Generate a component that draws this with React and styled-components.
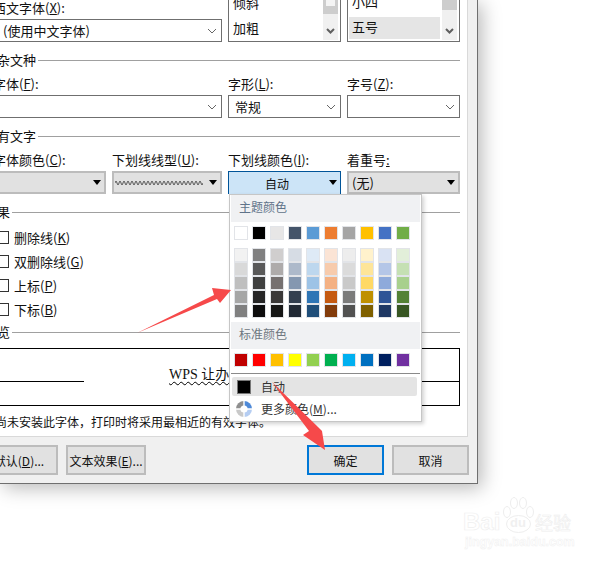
import React from 'react';
import styled, { createGlobalStyle } from 'styled-components';

const THEME = ['#ffffff', '#000000', '#e7e6e6', '#44546a', '#5b9bd5', '#ed7d31', '#a5a5a5', '#ffc000', '#4472c4', '#70ad47'];
const SHADES = [
  ['#f2f2f2', '#808080', '#d0cece', '#d6dce4', '#deeaf6', '#fbe4d5', '#ededed', '#fff2cc', '#d9e2f3', '#e2efd9'],
  ['#d9d9d9', '#595959', '#aeabab', '#adb9ca', '#bdd7ee', '#f7cbac', '#dbdbdb', '#fee599', '#b4c6e7', '#c5e0b3'],
  ['#bfbfbf', '#404040', '#757070', '#8497b0', '#9dc3e6', '#f4b183', '#c9c9c9', '#ffd965', '#8eaadb', '#a8d08d'],
  ['#a6a6a6', '#262626', '#3a3838', '#333f4f', '#2e75b5', '#c55a11', '#7b7b7b', '#bf9000', '#2f5496', '#538135'],
  ['#808080', '#0d0d0d', '#161616', '#222a35', '#1f4e79', '#833c0b', '#525252', '#7f6000', '#1f3864', '#375623'],
];
const STANDARD = ['#c00000', '#ff0000', '#ffc000', '#ffff00', '#92d050', '#00b050', '#00b0f0', '#0070c0', '#002060', '#7030a0'];
const HINT = '\u5982\u679c\u5c1a\u672a\u5b89\u88c5\u6b64\u5b57\u4f53\uff0c\u6253\u5370\u65f6\u5c06\u91c7\u7528\u6700\u76f8\u8fd1\u7684\u6709\u6548\u5b57\u4f53\u3002';

const wavePath = () => {
  let d = 'M0 3';
  for (let x = 0; x < 88; x += 4) d += ` q1 -4 2 0 t2 0`;
  return d;
};

const Chevron = () => (
  <ChevronIcon width="10" height="6" viewBox="0 0 10 6">
    <path d="M1 1l4 4 4-4" fill="none" stroke="#666" strokeWidth="1" />
  </ChevronIcon>
);

const ScrollDown = () => (
  <svg width="9" height="7" viewBox="0 0 9 7">
    <path d="M1 1l3.5 3.5L8 1" fill="none" stroke="#606060" strokeWidth="2" />
  </svg>
);

const Caret = () => (
  <CaretIcon width="8" height="5" viewBox="0 0 8 5">
    <path d="M0 0h8L4 5z" fill="#000" />
  </CaretIcon>
);

const MoreColorsIcon = () => (
  <svg width="16" height="18" viewBox="0 0 16 18">
    <path d="M8 1a8 8 0 0 0-8 8h8z" fill="#8f8f8f" />
    <path d="M8 1a8 8 0 0 1 8 8H8z" fill="#4f8ad8" />
    <path d="M0 9a8 8 0 0 0 8 8V9z" fill="#c9c9c9" />
    <path d="M16 9a8 8 0 0 1-8 8V9z" fill="#b5cdf2" />
    <path d="M8 1v16M0 9h16" stroke="#fff" strokeWidth="1.4" />
    <circle cx="8" cy="9" r="3.6" fill="#fff" />
  </svg>
);

const Arrows = () => (
  <ArrowLayer width="606" height="562" viewBox="0 0 606 562">
    <path d="M137 333L214 295 212 288 231 290 220 303 217 299z" fill="#f6494a" />
    <path d="M272 382L318 427 322 431 325 450 303 435 309 431z" fill="#f6494a" />
  </ArrowLayer>
);

const PawMark = () => (
  <PawIcon width="33" height="37" viewBox="0 0 33 37">
    <g fill="#fff" stroke="#eeeeee" strokeWidth="1">
      <ellipse cx="5" cy="15" rx="3.5" ry="5.5" />
      <ellipse cx="12" cy="6" rx="3.5" ry="5.5" />
      <ellipse cx="21" cy="6" rx="3.5" ry="5.5" />
      <ellipse cx="28" cy="15" rx="3.5" ry="5.5" />
      <ellipse cx="16.5" cy="27" rx="12" ry="8.5" />
    </g>
  </PawIcon>
);

const App = () => {
  return (
    <Page>
      <GlobalStyle />
      <Dialog>
        <Panel>
          <Form>
            <FieldGrid>
              <Field>
                <Label>西文字体(<u>X</u>):</Label>
                <ComboBox $indent={9}>(使用中文字体)<Chevron /></ComboBox>
              </Field>
              <ListBox>
                <ListItems>
                  <ListItem>倾斜</ListItem>
                  <ListItem>加粗</ListItem>
                </ListItems>
                <ScrollTrack>
                  <ScrollThumb $height={14}><ScrollThumbInner /></ScrollThumb>
                  <ScrollDown />
                </ScrollTrack>
              </ListBox>
              <ListBox>
                <ListItems>
                  <ListItem>小四</ListItem>
                  <ListItem $selected>五号</ListItem>
                </ListItems>
                <ScrollTrack>
                  <ScrollThumb $height={10} />
                  <ScrollDown />
                </ScrollTrack>
              </ListBox>
            </FieldGrid>

            <SectionTitle><span>复杂文种</span></SectionTitle>
            <FieldGrid>
              <Field>
                <Label>字体(<u>F</u>):</Label>
                <ComboBox><Chevron /></ComboBox>
              </Field>
              <Field>
                <Label>字形(<u>L</u>):</Label>
                <ComboBox>常规<Chevron /></ComboBox>
              </Field>
              <Field>
                <Label>字号(<u>Z</u>):</Label>
                <ComboBox><Chevron /></ComboBox>
              </Field>
            </FieldGrid>

            <SectionTitle><span>所有文字</span></SectionTitle>
            <FontGrid>
              <Field>
                <Label>字体颜色(<u>C</u>):</Label>
                <DropButton><Caret /></DropButton>
              </Field>
              <Field>
                <Label>下划线线型(<u>U</u>):</Label>
                <DropButton $dense>
                  <svg width="88" height="6" viewBox="0 0 88 6">
                    <path d={wavePath()} fill="none" stroke="#333" strokeWidth="0.8" />
                  </svg>
                  <Caret />
                </DropButton>
              </Field>
              <Field>
                <Label>下划线颜色(<u>I</u>):</Label>
                <DropButton $active><ActiveText>自动</ActiveText><Caret /></DropButton>
              </Field>
              <Field>
                <Label>着重号<u>:</u></Label>
                <DropButton>(无)<Caret /></DropButton>
              </Field>
            </FontGrid>

            <SectionTitle><span>效果</span></SectionTitle>
            <EffectList>
              <EffectRow><CheckBox />删除线(<u>K</u>)</EffectRow>
              <EffectRow><CheckBox />双删除线(<u>G</u>)</EffectRow>
              <EffectRow><CheckBox />上标(<u>P</u>)</EffectRow>
              <EffectRow><CheckBox />下标(<u>B</u>)</EffectRow>
            </EffectList>

            <SectionTitle><span>预览</span></SectionTitle>
            <PreviewBox>
              <PreviewRule $width={91} />
              <PreviewText>WPS 让办公更轻松</PreviewText>
              <PreviewRule $width={120} />
            </PreviewBox>
            <Hint>{HINT}</Hint>
          </Form>
        </Panel>
        <Footer>
          <FooterGroup>
            <Button $width={78}>默认(<u>D</u>)...</Button>
            <Button $width={80}>文本效果(<u>E</u>)...</Button>
          </FooterGroup>
          <FooterGroup>
            <Button $width={77} $primary>确定</Button>
            <Button $width={77}>取消</Button>
          </FooterGroup>
        </Footer>
      </Dialog>

      <ColorMenu>
        <MenuHeading $tint="#5f7389">主题颜色</MenuHeading>
        <SwatchRow $top={4}>
          {THEME.map((c) => <Swatch key={c} $color={c} />)}
        </SwatchRow>
        <ShadeGrid>
          {SHADES.map((row, i) => (
            <SwatchRow key={i} $top={0}>
              {row.map((c, j) => <Swatch key={j} $color={c} />)}
            </SwatchRow>
          ))}
        </ShadeGrid>
        <MenuHeading $tint="#6e7780" $top={4}>标准颜色</MenuHeading>
        <SwatchRow $top={4}>
          {STANDARD.map((c) => <Swatch key={c} $color={c} />)}
        </SwatchRow>
        <MenuDivider />
        <AutoItem><AutoChip />自动</AutoItem>
        <MoreItem><MoreColorsIcon />更多颜色(<u>M</u>)...</MoreItem>
      </ColorMenu>

      <Arrows />

      <Watermark>
        <PawMark />
        <LogoRow>
          <LogoWord>Bai</LogoWord>
          <DuBadge>du</DuBadge>
          <LogoCjk>经验</LogoCjk>
        </LogoRow>
        <LogoUrl>jingyan.baidu.com</LogoUrl>
      </Watermark>
    </Page>
  );
};

export default App;

const GlobalStyle = createGlobalStyle`
  html, body {
    margin: 0;
    padding: 0;
    background: #fff;
  }
  u {
    text-underline-offset: 1px;
  }
`;

const Page = styled.div`
  position: relative;
  width: 606px;
  height: 562px;
  overflow: hidden;
  background: #fff;
  font-family: "Noto Sans CJK SC", "Noto Sans", sans-serif;
  font-size: 13px;
  color: #111;
`;
const Dialog = styled.div`
  width: 478px;
  height: 484px;
  box-sizing: border-box;
  display: flex;
  flex-direction: column;
  background: #f0f0f0;
  border-right: 1px solid #6f6f6f;
  border-bottom: 1px solid #6f6f6f;
  box-shadow: 4px 4px 18px rgba(0, 0, 0, 0.28);
`;
const Panel = styled.div`
  width: 468px;
  height: 437px;
  flex: none;
  box-sizing: border-box;
  background: #fff;
  border-right: 1px solid #d9d9d9;
  border-bottom: 1px solid #d9d9d9;
  overflow: hidden;
`;
const Form = styled.div`
  width: 467px;
  margin-left: -7px;
`;
const FieldGrid = styled.div`
  display: grid;
  grid-template-columns: 229px 113px 113px;
  column-gap: 6px;
`;
const FontGrid = styled.div`
  display: grid;
  grid-template-columns: 113px 110px 113px 113px;
  column-gap: 6px;
`;
const Field = styled.div`
  display: flex;
  flex-direction: column;
  justify-content: flex-end;
  min-width: 0;
`;
const Label = styled.div`
  height: 19px;
  line-height: 16px;
  white-space: nowrap;
  u {
    text-decoration-thickness: 1px;
  }
`;
const ComboBox = styled.div`
  height: 23px;
  box-sizing: border-box;
  display: flex;
  align-items: center;
  justify-content: space-between;
  padding: 0 4px 0 ${(p) => p.$indent || 6}px;
  border: 1px solid #6f6f6f;
  background: #fff;
  line-height: 1;
  white-space: nowrap;
`;
const ChevronIcon = styled.svg`
  flex: none;
  margin-left: auto;
`;
const CaretIcon = styled.svg`
  flex: none;
  margin: 0 0 1px auto;
`;
const DropButton = styled.div`
  height: 23px;
  box-sizing: border-box;
  display: flex;
  align-items: center;
  justify-content: space-between;
  padding: 0 3px 0 ${(p) => (p.$dense ? '1px' : '3px')};
  border: 2px solid ${(p) => (p.$active ? '#005499' : '#bcbcbc')};
  border-width: ${(p) => (p.$active ? '1px 1px 0' : '2px')};
  background: ${(p) => (p.$active ? '#cce4f7' : '#e1e1e1')};
  white-space: nowrap;
`;
const ActiveText = styled.span`
  flex: 1;
  text-align: center;
  font-size: 12px;
  padding-right: 7px;
`;
const ListBox = styled.div`
  height: 42px;
  box-sizing: border-box;
  display: flex;
  border: 1px solid #6f6f6f;
  border-top: none;
  padding: 0 2px 1px 1px;
  overflow: hidden;
`;
const ListItems = styled.div`
  flex: 1;
  min-width: 0;
  display: flex;
  flex-direction: column;
  justify-content: flex-end;
  gap: 3px;
  padding-right: 2px;
`;
const ListItem = styled.div`
  height: 22px;
  flex: none;
  line-height: 19px;
  padding-left: 3px;
  margin-bottom: ${(p) => (p.$selected ? '1px' : '0')};
  background: ${(p) => (p.$selected ? '#e5e5e5' : 'transparent')};
`;
const ScrollTrack = styled.div`
  width: 15px;
  flex: none;
  background: #f0f0f0;
  display: flex;
  flex-direction: column;
  align-items: center;
  justify-content: space-between;
  padding-bottom: 5px;
`;
const ScrollThumb = styled.div`
  width: 100%;
  height: ${(p) => p.$height}px;
  background: #cdcdcd;
  display: flex;
  justify-content: center;
`;
const ScrollThumbInner = styled.div`
  width: 9px;
  height: 6px;
  background: #f4f4f4;
`;
const SectionTitle = styled.div`
  display: flex;
  align-items: center;
  height: 20px;
  margin: 8px 0 6px -9px;
  white-space: nowrap;
  span {
    position: relative;
    top: -1px;
  }
  &::after {
    content: '';
    flex: 1;
    height: 1px;
    margin-left: 2px;
    background: #a0a0a0;
  }
`;
const EffectList = styled.div`
  margin: -2px 0 -8px;
  padding-left: 3px;
`;
const EffectRow = styled.div`
  display: flex;
  align-items: center;
  height: 24px;
  box-sizing: border-box;
  padding-bottom: 2px;
  white-space: nowrap;
`;
const CheckBox = styled.span`
  width: 13px;
  height: 13px;
  box-sizing: border-box;
  flex: none;
  margin-right: 5px;
  border: 1px solid #333;
  background: #fff;
`;
const PreviewBox = styled.div`
  height: 58px;
  width: 467px;
  box-sizing: border-box;
  display: flex;
  justify-content: space-between;
  border: 1px solid #000;
  border-left: none;
`;
const PreviewRule = styled.div`
  width: ${(p) => p.$width}px;
  height: 1px;
  margin-top: 32px;
  background: #000;
`;
const PreviewText = styled.div`
  margin: 16px 0 0 85px;
  flex: 1;
  height: 20px;
  font-family: "Liberation Serif", "Noto Sans CJK SC", serif;
  font-size: 14px;
  line-height: 20px;
  white-space: nowrap;
  text-decoration: underline wavy #000 1px;
  text-underline-offset: 2px;
`;
const Hint = styled.div`
  margin: 7px 0 0 -22px;
  font-size: 12px;
  line-height: 18px;
  white-space: nowrap;
`;
const Footer = styled.div`
  flex: 1;
  display: flex;
  justify-content: space-between;
  padding: 8px 8px 0 0;
  margin-left: -20px;
`;
const FooterGroup = styled.div`
  display: flex;
  gap: 8px;
`;
const Button = styled.div`
  width: ${(p) => p.$width}px;
  height: 30px;
  box-sizing: border-box;
  display: flex;
  align-items: center;
  justify-content: center;
  font-size: 12px;
  white-space: pre;
  background: #e1e1e1;
  border: 2px solid ${(p) => (p.$primary ? '#0078d7' : '#bcbcbc')};
`;
const ColorMenu = styled.div`
  position: absolute;
  left: 229px;
  top: 194px;
  width: 193px;
  height: 228px;
  box-sizing: border-box;
  padding: 0 1px;
  background: #fff;
  border: 1px solid #c6c6c6;
  box-shadow: 2px 2px 4px rgba(0, 0, 0, 0.18);
  display: flex;
  flex-direction: column;
`;
const MenuHeading = styled.div`
  height: 27px;
  flex: none;
  margin-top: ${(p) => p.$top || 0}px;
  padding-left: 8px;
  background: #f0f1f3;
  color: ${(p) => p.$tint};
  font-size: 12px;
  line-height: 24px;
`;
const SwatchRow = styled.div`
  display: flex;
  gap: 4px;
  flex: none;
  margin-top: ${(p) => p.$top}px;
  padding-left: 3px;
`;
const ShadeGrid = styled.div`
  margin-top: 8px;
  flex: none;
`;
const Swatch = styled.div`
  width: 14px;
  height: 14px;
  box-sizing: border-box;
  background: ${(p) => p.$color};
  border: 1px solid #e2e4e8;
`;
const MenuDivider = styled.div`
  height: 1px;
  flex: none;
  margin: 6px 0 3px;
  background: #8a8a8a;
`;
const AutoItem = styled.div`
  height: 19px;
  flex: none;
  display: flex;
  align-items: center;
  margin: 0 3px 0 1px;
  padding-left: 5px;
  background: #e4e4e4;
  border-radius: 2px;
  color: #333;
  font-size: 12px;
`;
const AutoChip = styled.span`
  width: 14px;
  height: 14px;
  box-sizing: border-box;
  flex: none;
  margin-right: 10px;
  background: #000;
  border: 1px solid #777;
`;
const MoreItem = styled.div`
  height: 19px;
  flex: none;
  display: flex;
  align-items: center;
  margin-top: 3px;
  padding-left: 5px;
  color: #333;
  font-size: 12px;
  white-space: pre;
  svg {
    flex: none;
    margin-right: 9px;
  }
`;
const ArrowLayer = styled.svg`
  position: absolute;
  left: 0;
  top: 0;
  pointer-events: none;
`;
const Watermark = styled.div`
  position: absolute;
  left: 463px;
  top: 497px;
  width: 112px;
  font-family: "Liberation Sans", sans-serif;
`;
const LogoRow = styled.div`
  position: relative;
  display: flex;
  align-items: flex-end;
  height: 36px;
`;
const LogoWord = styled.span`
  width: 39px;
  font-size: 24px;
  line-height: 22px;
  font-weight: 700;
  color: #fff;
  -webkit-text-stroke: 0.7px #efefef;
`;
const DuBadge = styled.span`
  position: relative;
  width: 32px;
  margin-bottom: 3px;
  text-align: center;
  font-size: 13px;
  line-height: 15px;
  font-weight: 700;
  color: #f0f0f0;
`;
const LogoCjk = styled.span`
  margin-left: 1px;
  font-family: "Noto Sans CJK SC", sans-serif;
  font-size: 18px;
  line-height: 22px;
  color: #fff;
  -webkit-text-stroke: 0.6px #eeeeee;
`;
const PawIcon = styled.svg`
  position: absolute;
  left: 39px;
  top: 0;
`;
const LogoUrl = styled.div`
  margin: 3px 0 0 2px;
  font-size: 12.5px;
  line-height: 13px;
  font-weight: 700;
  white-space: nowrap;
  color: #fff;
  -webkit-text-stroke: 0.5px #f0f0f0;
`;
